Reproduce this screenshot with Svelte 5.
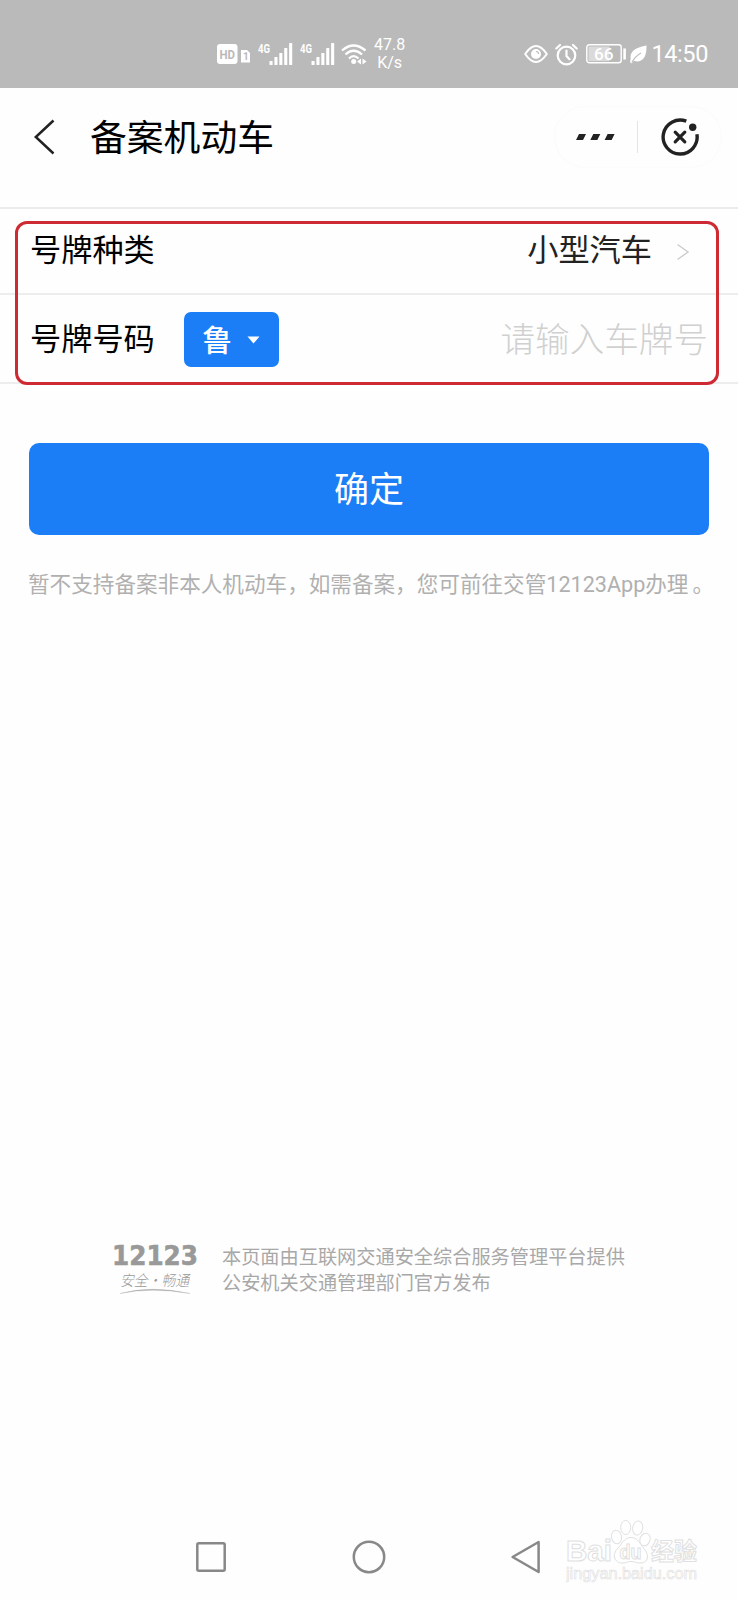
<script lang="ts">
  interface Props {
    province?: string;
    plateType?: string;
  }

  let { province = '鲁', plateType = '小型汽车' }: Props = $props();

  let plateNumber = $state('');

  const bars = [4, 8, 12, 17, 22];
</script>

{#snippet signal()}
  <svg class="signal" width="36" height="24" viewBox="0 0 36 24">
    <text x="0" y="11" textLength="12" lengthAdjust="spacingAndGlyphs">4G</text>
    {#each bars as h, i}
      <rect x={11.5 + i * 4.9} y={23 - h} width="3.1" height={h} rx="0.6" />
    {/each}
  </svg>
{/snippet}

<div class="screen">
  <div class="status">
    <div class="left">
      <svg class="hd" width="34" height="22" viewBox="0 0 34 22">
        <rect x="0" y="1" width="20.5" height="20" rx="3" fill="#fff" />
        <text class="cut" x="2.5" y="15.6" font-size="13" textLength="15.5" lengthAdjust="spacingAndGlyphs">HD</text>
        <path d="M24 7h6l3 3v9.5h-9z" fill="#fff" />
        <text class="cut" x="26" y="17" font-size="10">1</text>
      </svg>
      {@render signal()}
      {@render signal()}
      <svg class="wifi" width="26" height="22" viewBox="0 0 26 22">
        <g fill="none" stroke="#fff" stroke-width="2.3">
          <path d="M1 7.5Q12.5-2.5 24.5 7.5" />
          <path d="M4.5 11.5Q12.5 4 21 11.5" />
          <path d="M8 15.5Q12.5 10.8 17.5 15.5" />
        </g>
        <circle cx="12.7" cy="18.5" r="2.5" fill="#fff" />
        <path d="M20 15.5v6l-4-3zM21.5 15.5v6l4-3z" fill="#fff" />
      </svg>
      <div class="speed">
        <span>47.8</span>
        <span>K/s</span>
      </div>
    </div>
    <div class="right">
      <svg width="24" height="20" viewBox="0 0 24 20">
        <path d="M1.2 10Q12-6 22.8 10Q12 26 1.2 10z" fill="none" stroke="#fff" stroke-width="2" />
        <circle cx="12" cy="10" r="5" fill="#fff" />
        <path d="M12 7.5q2.600 0 2.600 2.500" fill="none" stroke="#bababa" stroke-width="1.1" />
      </svg>
      <svg class="alarm" width="23" height="23" viewBox="0 0 23 23">
        <g fill="none" stroke="#fff" stroke-width="2.2" stroke-linecap="round">
          <circle cx="11.5" cy="12.5" r="8.8" />
          <path d="M11.5 7.5v5.5l3 3.2M1.3 5.5L5 2M21.7 5.5L18 2" />
        </g>
      </svg>
      <svg class="battery" width="41" height="20" viewBox="0 0 41 20">
        <rect x="0.8" y="0.8" width="34.4" height="18" rx="2.5" fill="none" stroke="#fff" stroke-width="1.4" />
        <rect x="2.5" y="2.5" width="21" height="14.6" fill="#dadada" />
        <rect x="37.3" y="4.5" width="2.6" height="11" fill="#fff" />
        <text x="8" y="15.6" textLength="19.5" lengthAdjust="spacingAndGlyphs">66</text>
      </svg>
      <svg class="leaf" width="17" height="19" viewBox="0 0 17 19">
        <path d="M16.5 0.5Q17 16 7 16.5L4 15.8L1.5 18.5L0 17Q1 14 0.5 11.5Q1 3 16.5 0.5z" fill="#fff" />
        <path d="M1.8 17.5Q5 11.5 11 8" fill="none" stroke="#bababa" stroke-width="1.1" />
      </svg>
      <span class="time">14:50</span>
    </div>
  </div>

  <header>
    <svg class="back" width="22" height="36" viewBox="0 0 22 36">
      <path d="M20.5 1.5L2.800 18L20.5 34.5" fill="none" stroke="#222" stroke-width="2.5" />
    </svg>
    <h1>备案机动车</h1>
    <div class="capsule">
      <svg class="dots" width="40" height="8" viewBox="0 0 40 8">
        <path d="M3 1h7l-3 6h-7zM17.3 1h7l-3 6h-7zM31.6 1h7l-3 6h-7z" fill="#222" />
      </svg>
      <span class="split"></span>
      <svg class="close" width="40" height="40" viewBox="0 0 40 40">
        <path d="M26.3 4.2A17 17 0 1 0 36.9 17.2" fill="none" stroke="#222" stroke-width="3.4" />
        <circle cx="32.7" cy="10.3" r="3.7" fill="#222" />
        <path d="M15.2 15.2l9.6 9.6M24.8 15.2l-9.6 9.6" stroke="#222" stroke-width="3.2" stroke-linecap="round" />
      </svg>
    </div>
  </header>

  <section class="form">
    <div class="row type">
      <span class="label">号牌种类</span>
      <span class="value">{plateType}</span>
      <svg width="14" height="18" viewBox="0 0 14 18">
        <path d="M1.5 1.5L12 9L1.5 16.5" fill="none" stroke="#ccc" stroke-width="1.4" />
      </svg>
    </div>
    <div class="row number">
      <span class="label">号牌号码</span>
      <button class="province">
        <span>{province}</span>
        <svg width="13" height="8" viewBox="0 0 13 8">
          <path d="M0.5 0.5h12L6.5 7.5z" fill="#fff" />
        </svg>
      </button>
      <input bind:value={plateNumber} placeholder="请输入车牌号" />
    </div>
    <div class="highlight"></div>
  </section>

  <button class="submit">确定</button>
  <p class="note">暂不支持备案非本人机动车，如需备案，您可前往交管12123App办理<span>。</span></p>

  <footer>
    <svg class="logo" width="92" height="56" viewBox="0 0 92 56">
      <text class="digits" x="1" y="22.500" textLength="86" lengthAdjust="spacingAndGlyphs">12123</text>
      <text class="motto" x="9" y="43.500" textLength="69" lengthAdjust="spacingAndGlyphs">安全·畅通</text>
      <path d="M9 51.500Q40 43 79 51.500Q40 44.800 9 51.500z" fill="#aaa" stroke="#aaa" stroke-width="0.3" />
    </svg>
    <p>本页面由互联网交通安全综合服务管理平台提供<br />公安机关交通管理部门官方发布</p>
  </footer>

  <nav>
    <svg width="34" height="34" viewBox="0 0 34 34">
      <rect x="3.3" y="3.3" width="27.4" height="27.4" rx="1.5" />
    </svg>
    <svg width="34" height="34" viewBox="0 0 34 34">
      <circle cx="17" cy="17" r="15.2" />
    </svg>
    <svg width="34" height="34" viewBox="0 0 34 34">
      <path d="M28.600 2v30L2.600 17z" stroke-linejoin="round" />
    </svg>
  </nav>

  <svg class="watermark" width="140" height="70" viewBox="0 0 140 70">
    <g fill="#fff" stroke="#e0e0e0" stroke-width="1">
      <text x="0" y="42" font-size="30" textLength="46" lengthAdjust="spacingAndGlyphs">Bai</text>
      <ellipse cx="50.500" cy="18" rx="5" ry="6.800" transform="rotate(-10 50.5 18)" />
      <ellipse cx="59.700" cy="8.500" rx="5" ry="7" />
      <ellipse cx="71.700" cy="9" rx="5" ry="7" transform="rotate(10 71.7 9)" />
      <ellipse cx="79" cy="20.500" rx="5" ry="6.500" transform="rotate(20 79 20.5)" />
      <path d="M65 18.500C58 18.500 56 25 52 29C45 36 49 44 56 44C62 44 60 42.500 65 42.500C70 42.500 69 44 75 44C82 44 84 36 77.500 29C74 25 72 18.500 65 18.500z" />
      <text x="53.500" y="40" font-size="20" textLength="22" lengthAdjust="spacingAndGlyphs">du</text>
      <text class="cjk" x="85" y="41" font-size="24" textLength="46" lengthAdjust="spacingAndGlyphs">经验</text>
      <text class="url" x="0" y="60" font-size="16" textLength="131" lengthAdjust="spacingAndGlyphs">jingyan.baidu.com</text>
    </g>
  </svg>
</div>

<style>
  :global(body) {
    margin: 0;
  }

  .screen {
    position: relative;
    display: flex;
    flex-direction: column;
    width: 738px;
    height: 1600px;
    overflow: hidden;
    background: #fefefe;
    color: #000;
    font-family: Roboto, 'Noto Sans CJK SC', sans-serif;
  }

  svg {
    display: block;
    flex-shrink: 0;
  }

  button {
    border: 0;
    background: #1b7ef7;
    color: #fff;
    font-family: inherit;
  }

  .status {
    display: flex;
    justify-content: space-between;
    height: 88px;
    box-sizing: border-box;
    padding: 20px 30px 0 217px;
    background: #bababa;
    color: #fff;
  }

  .left,
  .right {
    display: flex;
    align-items: center;
  }

  .signal {
    margin-left: 7px;
    fill: #fff;
  }

  .signal text {
    font-size: 13px;
    font-weight: 700;
  }

  .signal + .signal {
    margin-left: 6px;
  }

  .cut {
    fill: #bababa;
    font-weight: 700;
  }

  .wifi {
    margin-left: 5px;
  }

  .speed {
    display: flex;
    flex-direction: column;
    align-items: center;
    margin-left: 7px;
    font-size: 16px;
    line-height: 18.5px;
  }

  .alarm {
    margin-left: 7px;
  }

  .battery {
    margin-left: 8px;
  }

  .battery text {
    fill: #fff;
    font-size: 16px;
    font-weight: 500;
  }

  .leaf {
    margin-left: 3px;
  }

  .time {
    margin-left: 4px;
    font-size: 23.5px;
    letter-spacing: -0.4px;
  }

  header {
    display: flex;
    align-items: center;
    height: 121px;
    box-sizing: border-box;
    padding: 0 16px 21px 33px;
    border-bottom: 2px solid #ececea;
  }

  h1 {
    flex: 1;
    margin: 0 0 0 35px;
    padding-top: 4px;
    font-size: 36.8px;
    font-weight: 400;
    line-height: 50px;
  }

  .capsule {
    display: flex;
    align-items: center;
    width: 168px;
    height: 62px;
    box-sizing: border-box;
    padding-left: 21px;
    border: 1px solid #fbfbfb;
    border-radius: 31px;
  }

  .split {
    width: 1px;
    height: 32px;
    margin: 0 22px 0 21px;
    background: #e5e5e5;
  }

  .form {
    position: relative;
  }

  .row {
    display: flex;
    align-items: center;
    box-sizing: border-box;
    padding-left: 30px;
    border-bottom: 2px solid #ededed;
    font-size: 31.2px;
    line-height: 44px;
  }

  .type {
    height: 86px;
    padding-right: 48px;
    padding-bottom: 1px;
  }

  .type svg {
    margin: 3px 0 0 24px;
  }

  .value {
    margin-left: auto;
    color: #222;
  }

  .number {
    height: 89px;
    padding-top: 2px;
    padding-right: 30px;
  }

  .province {
    display: flex;
    align-items: center;
    justify-content: center;
    gap: 15px;
    width: 95px;
    height: 55px;
    margin-left: 29px;
    padding: 0;
    border-radius: 7px;
    font-size: 30px;
    font-weight: 500;
  }

  .province span {
    padding-bottom: 4px;
  }

  input {
    flex: 1;
    min-width: 0;
    padding: 0;
    border: 0;
    outline: 0;
    background: none;
    font: 300 34.6px/48px Roboto, 'Noto Sans CJK SC', sans-serif;
    text-align: right;
  }

  input::placeholder {
    color: #d0d0d0;
    opacity: 1;
  }

  .highlight {
    position: absolute;
    top: 12px;
    left: 15px;
    width: 704px;
    height: 164px;
    box-sizing: border-box;
    border: 3px solid #ce2a33;
    border-radius: 12px;
    pointer-events: none;
  }

  .submit {
    height: 92px;
    margin: 59px 29px 0;
    padding: 0 0 6px;
    border-radius: 10px;
    font-size: 35px;
  }

  .note {
    margin: 35px 0 0 28px;
    color: #b0b0b0;
    font-size: 21.6px;
    line-height: 30px;
    white-space: nowrap;
  }

  .note span {
    margin-left: 4px;
  }

  footer {
    display: flex;
    align-items: flex-start;
    margin: 642px 0 0 111px;
  }

  footer p {
    margin: 3px 0 0 19px;
    color: #a8a8a8;
    font-size: 19.2px;
    line-height: 25.5px;
    white-space: nowrap;
  }

  .digits {
    fill: #999;
    stroke: #999;
    stroke-width: 0.6px;
    font: 700 26px 'DejaVu Sans', sans-serif;
  }

  .motto {
    fill: #999;
    font: italic 300 15px 'Noto Sans CJK SC', sans-serif;
  }

  nav {
    display: flex;
    gap: 124px;
    margin: auto 0 26px 194px;
  }

  nav svg {
    fill: none;
    stroke: #888;
    stroke-width: 2.5px;
  }

  .watermark {
    position: absolute;
    left: 566px;
    top: 1519px;
  }

  .watermark text {
    font-family: 'Liberation Sans', sans-serif;
    font-weight: 700;
  }

  .watermark .cjk {
    font-family: 'Noto Sans CJK SC', sans-serif;
  }

  .watermark .url {
    font-weight: 400;
    stroke-width: 0.6px;
  }
</style>
